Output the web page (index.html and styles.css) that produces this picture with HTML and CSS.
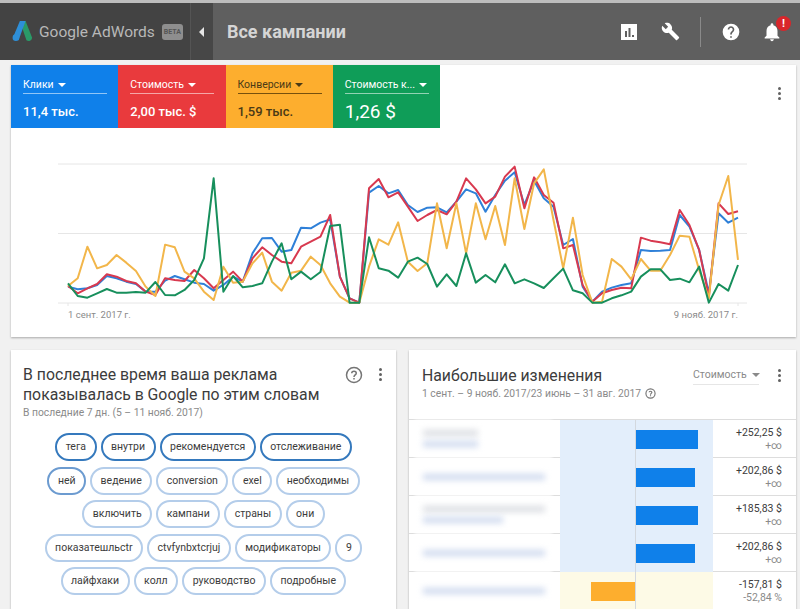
FILE: index.html
```html
<!DOCTYPE html>
<html lang="ru">
<head>
    <meta charset="UTF-8">
    <title>Google AdWords - Все кампании</title>
    <link rel="stylesheet" href="styles.css">
</head>
<body>
    <div class="header">
        <div class="brand">
            <svg class="logo" viewBox="0 0 24 26" width="21" height="23">
                <path d="M9 1 L15.500 1 L23 20 A4 4 0 0 1 16.500 23 Z" fill="#2a9a68"/>
                <path d="M9 1 L15.500 1 L7.500 23 L1 20 Z" fill="#2e8fd8"/>
                <circle cx="4.500" cy="20" r="3.800" fill="#2e8fd8"/>
            </svg>
            <span class="brand-name">Google AdWords</span>
            <span class="beta">BETA</span>
        </div>
        <div class="collapse"><span class="collapse-arrow"></span></div>
        <div class="page-title">Все кампании</div>
        <div class="tools">
            <svg class="tool" viewBox="0 0 24 24" width="24" height="24">
                <path d="M4 4 H20 V20 H4 Z M8 11 V17 H10 V11 Z M11.500 8 V17 H13.500 V8 Z M15 15 V17 H17 V15 Z" fill="#fff" fill-rule="evenodd"/>
            </svg>
            <svg class="tool" viewBox="0 0 24 24" width="19" height="19">
                <path d="M22.700 19 L13.600 9.900 C14.500 7.600 14 4.900 12.100 3 C10.100 1 7.100 .6 4.700 1.700 L9 6 L6 9 L1.600 4.700 C.4 7.100 .9 10.100 2.900 12.100 C4.800 14 7.500 14.500 9.800 13.600 L18.900 22.700 C19.300 23.100 19.900 23.100 20.300 22.700 L22.600 20.400 C23.100 20 23.100 19.300 22.700 19 Z" fill="#fff"/>
            </svg>
            <span class="tool-sep"></span>
            <svg class="tool" viewBox="0 0 24 24" width="20" height="20">
                <path d="M12 2 A10 10 0 1 0 12 22 A10 10 0 1 0 12 2 Z M13 19 H11 V17 H13 Z M15.100 11.300 L14.200 12.200 C13.500 12.900 13 13.500 13 15 H11 V14.500 C11 13.400 11.500 12.400 12.200 11.700 L13.400 10.400 C13.800 10.100 14 9.600 14 9 C14 7.900 13.100 7 12 7 C10.900 7 10 7.900 10 9 H8 C8 6.800 9.800 5 12 5 C14.200 5 16 6.800 16 9 C16 9.900 15.600 10.700 15.100 11.300 Z" fill="#fff" fill-rule="evenodd"/>
            </svg>
            <div class="bell">
                <svg viewBox="0 0 24 24" width="22" height="22">
                    <path d="M12 22 C13.100 22 14 21.100 14 20 H10 C10 21.100 10.900 22 12 22 Z M18 16 V11 C18 7.900 16.400 5.400 13.500 4.700 V4 C13.500 3.200 12.800 2.500 12 2.500 C11.200 2.500 10.500 3.200 10.500 4 V4.700 C7.600 5.400 6 7.900 6 11 V16 L4 18 V19 H20 V18 Z" fill="#fff"/>
                </svg>
                <span class="bell-badge">!</span>
            </div>
        </div>
    </div>

    <div class="card overview">
        <div class="tiles">
            <div class="tile tile-blue">
                <div class="tile-label"><span>Клики</span><i class="caret"></i></div>
                <div class="tile-value">11,4 тыс.</div>
            </div>
            <div class="tile tile-red">
                <div class="tile-label"><span>Стоимость</span><i class="caret"></i></div>
                <div class="tile-value">2,00 тыс. $</div>
            </div>
            <div class="tile tile-orange">
                <div class="tile-label"><span>Конверсии</span><i class="caret"></i></div>
                <div class="tile-value">1,59 тыс.</div>
            </div>
            <div class="tile tile-green">
                <div class="tile-label"><span>Стоимость к...</span><i class="caret"></i></div>
                <div class="tile-value tile-value-big">1,26 $</div>
            </div>
        </div>
        <div class="kebab overview-kebab"><i></i><i></i><i></i></div>
        <svg class="chart" viewBox="11 128 785 209" width="785" height="209">
            <path class="grid" d="M58 164 H747 M58 233.500 H747 M58 303 H747 M68 303 V306 M738 303 V306"/>
            <g transform="translate(68 150) scale(9.71 0.3333)">
                <polyline class="line line-blue" points="0,410 1,418 2,415 3,405 4,378 5,385 6,395 7,402 8,425 9,425 10,392 11,378 12,388 13,398 14,402 15,422 16,405 17,380 18,395 19,310 20,265 21,264 22,305 23,300 24,233 25,235 26,218 27,208 28,380 29,445 30,458 31,128 32,108 33,130 34,120 35,165 36,186 37,173 38,172 39,187 40,155 41,118 42,130 43,185 44,135 45,92 46,67 47,165 48,92 49,145 50,170 51,285 52,267 53,410 54,455 55,425 56,413 57,405 58,400 59,300 60,303 61,302 62,300 63,195 64,230 65,300 66,430 67,190 68,218 69,203"/>
                <polyline class="line line-red" points="0,408 1,430 2,415 3,402 4,373 5,380 6,393 7,400 8,425 9,435 10,385 11,390 12,393 13,360 14,385 15,415 16,390 17,365 18,395 19,325 20,292 21,315 22,335 23,340 24,290 25,275 26,260 27,195 28,380 29,445 30,458 31,115 32,87 33,142 34,127 35,170 36,213 37,195 38,180 39,193 40,155 41,85 42,118 43,160 44,140 45,80 46,50 47,175 48,82 49,135 50,158 51,295 52,285 53,405 54,455 55,430 56,420 57,413 58,415 59,263 60,272 61,277 62,283 63,180 64,225 65,300 66,440 67,160 68,192 69,184"/>
                <polyline class="line line-orange" points="0,408 1,385 2,290 3,355 4,345 5,315 6,338 7,363 8,410 9,438 10,284 11,292 12,365 13,385 14,425 15,450 16,350 17,398 18,395 19,340 20,308 21,395 22,422 23,368 24,362 25,320 26,345 27,400 28,440 29,458 30,458 31,350 32,268 33,284 34,217 35,335 36,363 37,340 38,160 39,295 40,160 41,310 42,160 43,268 44,168 45,285 46,85 47,237 48,100 49,58 50,210 51,355 52,203 53,375 54,458 55,455 56,327 57,350 58,388 59,327 60,362 61,362 62,315 63,257 64,260 65,360 66,445 67,165 68,78 69,330"/>
                <polyline class="line line-green" points="0,400 1,438 2,443 3,430 4,417 5,428 6,428 7,426 8,428 9,396 10,435 11,436 12,420 13,390 14,325 15,85 16,425 17,378 18,412 19,408 20,400 21,335 22,280 23,388 24,365 25,388 26,366 27,228 28,224 29,458 30,458 31,262 32,355 33,362 34,383 35,335 36,323 37,342 38,410 39,373 40,408 41,310 42,398 43,375 44,397 45,343 46,400 47,388 48,400 49,414 50,385 51,356 52,421 53,430 54,458 55,458 56,445 57,436 58,425 59,380 60,358 61,358 62,390 63,386 64,397 65,350 66,458 67,402 68,422 69,345"/>
            </g>
            <text class="axis-label" x="68" y="318">1 сент. 2017 г.</text>
            <text class="axis-label" x="738" y="318" text-anchor="end">9 нояб. 2017 г.</text>
        </svg>
    </div>

    <div class="columns">
        <div class="card words">
            <div class="card-head">
                <div class="card-titles">
                    <h2>В последнее время ваша реклама показывалась в Google по этим словам</h2>
                    <p class="card-sub">В последние 7 дн. (5 – 11 нояб. 2017)</p>
                </div>
                <svg class="help" viewBox="0 0 24 24" width="18" height="18">
                    <circle cx="12" cy="12" r="10" fill="none" stroke="#757575" stroke-width="2"/>
                    <path d="M9 9.500 C9 7.800 10.300 7 12 7 C13.700 7 15 8 15 9.500 C15 11.800 12 11.800 12 14.500 M12 16 V18" fill="none" stroke="#757575" stroke-width="2"/>
                </svg>
                <div class="kebab"><i></i><i></i><i></i></div>
            </div>
            <div class="chips">
                <div class="chip-row">
                    <span class="chip chip-strong">тега</span>
                    <span class="chip chip-strong">внутри</span>
                    <span class="chip chip-strong">рекомендуется</span>
                    <span class="chip chip-strong">отслеживание</span>
                </div>
                <div class="chip-row">
                    <span class="chip chip-mid">ней</span>
                    <span class="chip">ведение</span>
                    <span class="chip">conversion</span>
                    <span class="chip">exel</span>
                    <span class="chip">необходимы</span>
                </div>
                <div class="chip-row">
                    <span class="chip">включить</span>
                    <span class="chip">кампани</span>
                    <span class="chip">страны</span>
                    <span class="chip">они</span>
                </div>
                <div class="chip-row">
                    <span class="chip">показатешльctr</span>
                    <span class="chip">ctvfynbxtcrjuj</span>
                    <span class="chip">модификаторы</span>
                    <span class="chip">9</span>
                </div>
                <div class="chip-row">
                    <span class="chip">лайфхаки</span>
                    <span class="chip">колл</span>
                    <span class="chip">руководство</span>
                    <span class="chip">подробные</span>
                </div>
            </div>
        </div>

        <div class="card changes">
            <div class="card-head changes-head">
                <div class="card-titles">
                    <h2>Наибольшие изменения</h2>
                    <p class="card-sub date-range">1 сент. – 9 нояб. 2017/23 июнь – 31 авг. 2017
                        <svg viewBox="0 0 24 24" width="11" height="11">
                            <circle cx="12" cy="12" r="10" fill="none" stroke="#757575" stroke-width="2.500"/>
                            <path d="M9 9.500 C9 7.800 10.300 7 12 7 C13.700 7 15 8 15 9.500 C15 11.800 12 11.800 12 14.500 M12 16 V18" fill="none" stroke="#757575" stroke-width="2.500"/>
                        </svg>
                    </p>
                </div>
                <div class="metric-select"><span>Стоимость</span><i class="caret caret-grey"></i></div>
                <div class="kebab"><i></i><i></i><i></i></div>
            </div>
            <div class="change-table">
                <div class="change-row">
                    <div class="name-cell"><span class="smudge smudge-grey smudge-short"></span><span class="smudge smudge-short"></span></div>
                    <div class="bar-cell"><div class="half"></div><div class="half"><div class="bar bar-up" style="width: 81%"></div></div></div>
                    <div class="value-cell"><b>+252,25 $</b><small>+∞</small></div>
                </div>
                <div class="change-row">
                    <div class="name-cell"><span class="smudge"></span></div>
                    <div class="bar-cell"><div class="half"></div><div class="half"><div class="bar bar-up" style="width: 77%"></div></div></div>
                    <div class="value-cell"><b>+202,86 $</b><small>+∞</small></div>
                </div>
                <div class="change-row">
                    <div class="name-cell"><span class="smudge smudge-grey"></span><span class="smudge smudge-mid"></span></div>
                    <div class="bar-cell"><div class="half"></div><div class="half"><div class="bar bar-up" style="width: 81%"></div></div></div>
                    <div class="value-cell"><b>+185,83 $</b><small>+∞</small></div>
                </div>
                <div class="change-row">
                    <div class="name-cell"><span class="smudge"></span></div>
                    <div class="bar-cell"><div class="half"></div><div class="half"><div class="bar bar-up" style="width: 77%"></div></div></div>
                    <div class="value-cell"><b>+202,86 $</b><small>+∞</small></div>
                </div>
                <div class="change-row row-down">
                    <div class="name-cell"><span class="smudge"></span></div>
                    <div class="bar-cell"><div class="half half-down"><div class="bar bar-down" style="width: 59%"></div></div><div class="half"></div></div>
                    <div class="value-cell"><b>-157,81 $</b><small>-52,84 %</small></div>
                </div>
            </div>
        </div>
    </div>
</body>
</html>
```

FILE: styles.css
```css
html, body {
    height: 100%;
}

body {
    margin: 0;
    width: 800px;
    height: 609px;
    overflow: hidden;
    background-color: #f1f1f1;
    font-family: Roboto, 'Liberation Sans', sans-serif;
    color: #3c3c3c;
}

.header {
    display: flex;
    align-items: stretch;
    height: 57px;
    margin-top: 3px;
    background-color: #5f5f5f;
    color: #ddd;
    box-shadow: 0 -3px 0 #bdbdbd;
}

.brand {
    display: flex;
    align-items: center;
    width: 190px;
    box-sizing: border-box;
    padding-left: 12px;
    background-color: #434343;
}

.logo {
    flex-shrink: 0;
    margin-right: 6px;
}

.brand-name {
    font-size: 15.500px;
    color: #b8b8b8;
    white-space: nowrap;
}

.beta {
    display: block;
    width: 21px;
    margin-left: 7px;
    background-color: #8e8e8e;
    border-radius: 3px;
    color: #555;
    font-size: 7px;
    font-weight: 700;
    line-height: 16px;
    text-align: center;
}

.collapse {
    display: flex;
    align-items: center;
    width: 23px;
    padding-left: 8px;
    background-color: #474747;
    border-left: 1px solid #545454;
    box-sizing: border-box;
}

.collapse-arrow {
    width: 0;
    height: 0;
    border-top: 5px solid transparent;
    border-bottom: 5px solid transparent;
    border-right: 5px solid #e6e6e6;
}

.page-title {
    display: flex;
    align-items: center;
    flex: 1;
    padding-left: 14px;
    font-size: 18px;
    font-weight: 700;
    color: #d5d5d5;
}

.tools {
    display: flex;
    align-items: center;
    padding-right: 17px;
}

.tool {
    display: block;
    margin-left: 20px;
}

.tool-sep {
    width: 1px;
    height: 30px;
    margin-left: 20px;
    background-color: #8a8a8a;
}

.bell {
    position: relative;
    display: flex;
    margin-left: 20px;
}

.bell-badge {
    position: absolute;
    top: -5px;
    right: -8px;
    width: 15px;
    height: 15px;
    border-radius: 50%;
    background-color: #d9262b;
    color: white;
    font-size: 11px;
    font-weight: 700;
    line-height: 15px;
    text-align: center;
}

.card {
    position: relative;
    background-color: white;
    box-shadow: 0 1px 2px rgba(0, 0, 0, 0.3);
}

.overview {
    width: 785px;
    height: 272px;
    margin: 5px 0 0 11px;
}

.tiles {
    display: flex;
    height: 63px;
}

.tile {
    width: 107.250px;
    box-sizing: border-box;
    padding: 13px 12px 0;
    color: white;
}

.tile-blue { background-color: #0f80ea; }
.tile-red { background-color: #e93a3d; }
.tile-orange { background-color: #fdae2e; color: #4a3a16; }
.tile-green { background-color: #0f9d58; }

.tile-label {
    display: flex;
    align-items: center;
    width: 84px;
    padding-bottom: 1px;
    border-bottom: 1px solid rgba(255, 255, 255, 0.55);
    font-size: 10.500px;
    line-height: 14px;
    white-space: nowrap;
}

.tile-orange .tile-label {
    border-bottom-color: rgba(60, 40, 0, 0.7);
}

.caret {
    flex-shrink: 0;
    width: 0;
    height: 0;
    margin-left: 4px;
    border-left: 4px solid transparent;
    border-right: 4px solid transparent;
    border-top: 4px solid currentColor;
}

.tile-value {
    margin-top: 10px;
    font-size: 13px;
    font-weight: 500;
    line-height: 16px;
    white-space: nowrap;
}

.tile-value-big {
    margin-top: 7px;
    font-size: 19px;
    font-weight: 400;
    line-height: 22px;
}

.kebab {
    display: flex;
    flex-direction: column;
    gap: 2px;
    flex-shrink: 0;
}

.kebab i {
    display: block;
    width: 3px;
    height: 3px;
    border-radius: 50%;
    background-color: #616161;
}

.overview-kebab {
    position: absolute;
    top: 22px;
    right: 15px;
}

.chart {
    display: block;
}

.grid {
    fill: none;
    stroke: #e6e6e6;
    stroke-width: 1;
}

.line {
    fill: none;
    stroke-width: 2;
    stroke-linejoin: round;
    vector-effect: non-scaling-stroke;
}

.line-blue { stroke: #2f80d8; }
.line-red { stroke: #d8394f; }
.line-orange { stroke: #f2b64a; }
.line-green { stroke: #178f5c; }

.axis-label {
    font-size: 9.500px;
    fill: #8a8a8a;
}

.columns {
    display: flex;
    gap: 13px;
    margin: 13px 0 0 11px;
}

.words {
    width: 385px;
    height: 259px;
}

.changes {
    width: 387px;
    height: 259px;
}

.card-head {
    display: flex;
    align-items: flex-start;
    padding: 15px 14px 0 12px;
}

.card-titles {
    flex: 1;
}

h2 {
    margin: 0;
    font-size: 15.800px;
    font-weight: 400;
    line-height: 20px;
    color: #3c3c3c;
}

.card-sub {
    margin: 0;
    font-size: 10.300px;
    line-height: 15px;
    color: #8a8a8a;
}

.help {
    margin: 1px 16px 0 0;
}

.card-head .kebab {
    margin-top: 3px;
}

.chips {
    display: flex;
    flex-direction: column;
    gap: 5.500px;
    margin-top: 13px;
}

.chip-row {
    display: flex;
    justify-content: center;
    gap: 4px;
}

.chip {
    height: 28px;
    box-sizing: border-box;
    padding: 0 8.500px;
    border: 2px solid #b4cdea;
    border-radius: 14px;
    font-size: 10.500px;
    line-height: 24px;
    white-space: nowrap;
}

.chip-strong {
    border-color: #3579bd;
}

.chip-mid {
    border-color: #6c9bd0;
}

.changes-head {
    height: 53px;
    padding-top: 16px;
    padding-left: 13px;
    padding-right: 15px;
}

.date-range {
    display: flex;
    align-items: center;
    gap: 4px;
}

.metric-select {
    display: flex;
    align-items: center;
    width: 66px;
    margin: 2px 19px 0 0;
    padding-bottom: 3px;
    border-bottom: 1px solid #e6e6e6;
    font-size: 10.500px;
    color: #8a8a8a;
}

.caret-grey {
    margin-left: 5px;
}

.change-table {
    border-top: 1px solid #ddd;
}

.change-row {
    display: grid;
    grid-template-columns: 151px 153px 83px;
    height: 38px;
    border-bottom: 1px solid #ddd;
    box-sizing: border-box;
}

.name-cell {
    display: flex;
    flex-direction: column;
    justify-content: center;
    gap: 5px;
    margin: 0 8px 0 6px;
    padding-left: 8px;
    background-color: white;
    box-shadow: 0 0 3px white;
}

.smudge {
    display: block;
    width: 122px;
    height: 6px;
    background-color: #ced9ee;
    filter: blur(3px);
}

.smudge-grey {
    background-color: #dadde2;
}

.smudge-short {
    width: 55px;
}

.smudge-mid {
    width: 80px;
}

.bar-cell {
    display: grid;
    grid-template-columns: 76px 77px;
    margin-bottom: -1px;
    background-color: #e3eefb;
}

.row-down .bar-cell {
    background-color: #fdfae6;
}

.half {
    display: flex;
    align-items: center;
}

.half:first-child {
    border-right: 1px solid #d3d8de;
}

.half-down {
    justify-content: flex-end;
}

.bar {
    height: 19px;
}

.bar-up {
    background-color: #0f80ea;
}

.bar-down {
    background-color: #fdae2e;
}

.value-cell {
    display: flex;
    flex-direction: column;
    justify-content: center;
    align-items: flex-end;
    padding-right: 14px;
    font-size: 10.500px;
    line-height: 13px;
}

.value-cell b {
    font-weight: 400;
    color: #3c3c3c;
}

.value-cell small {
    font-size: 10.500px;
    color: #8a8a8a;
}
```
